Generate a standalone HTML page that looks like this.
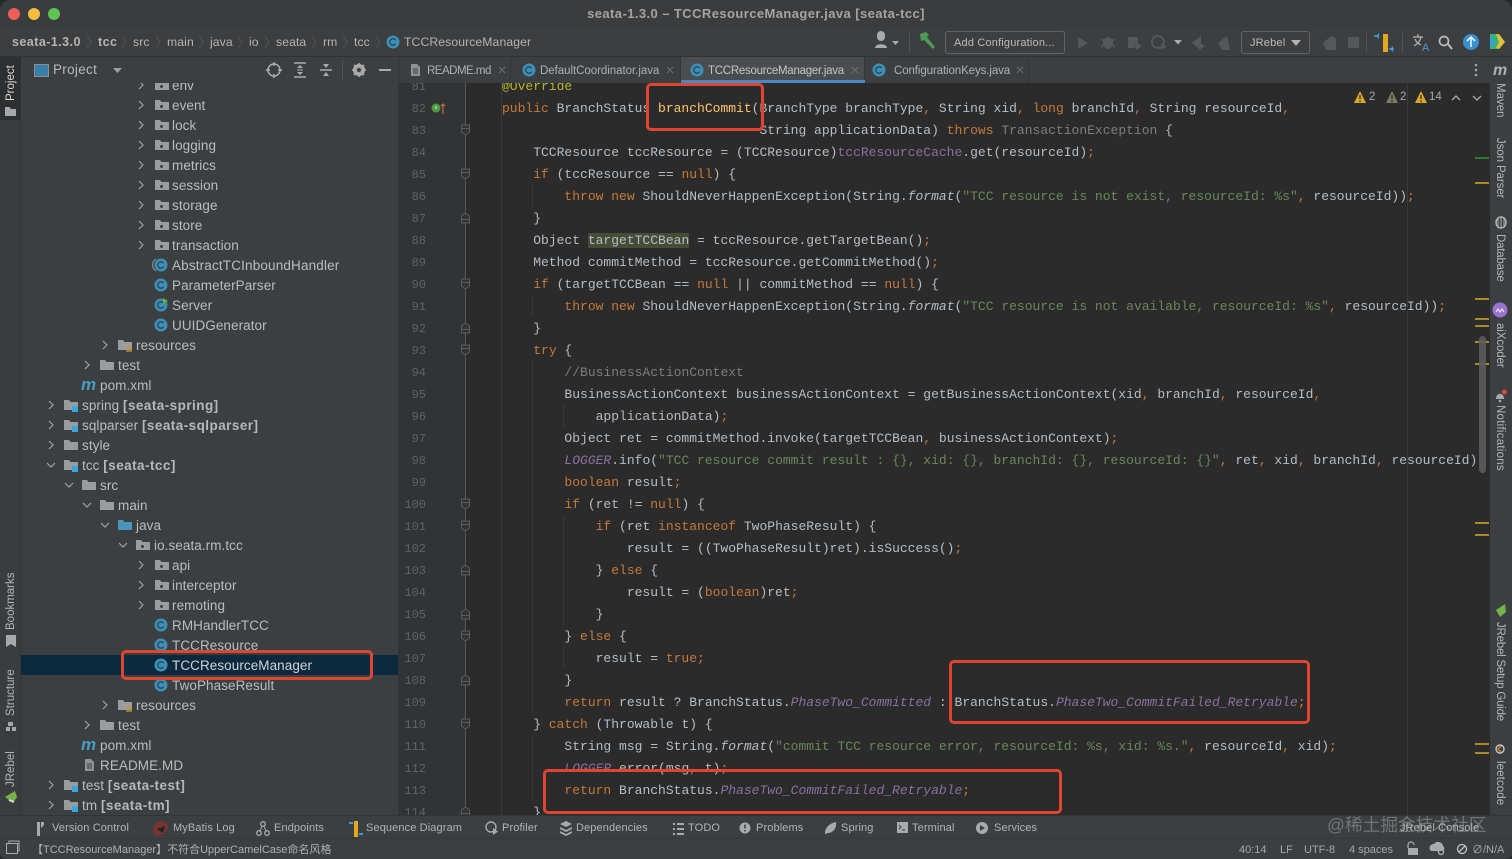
<!DOCTYPE html>
<html lang="en"><head><meta charset="utf-8"><title>seata-1.3.0 – TCCResourceManager.java [seata-tcc]</title>
<style>
*{box-sizing:border-box}
html,body{margin:0;padding:0;width:1512px;height:859px;overflow:hidden;background:#26282a}
body{font-family:"Liberation Sans","Noto Sans CJK SC",sans-serif;color:#bbbbbb}
#w{position:absolute;left:0;top:0;width:1512px;height:859px;background:#3c3f41;border-radius:10px 10px 6px 6px;overflow:hidden}
.b{position:absolute}
.t{position:absolute;white-space:pre}
svg{position:absolute;overflow:visible}
#title{left:0;top:0;width:1512px;height:28px;background:#3a3c3e;text-align:center;font-size:13px;font-weight:bold;line-height:27px;color:#a4a4a4;letter-spacing:.42px}
#nav{left:0;top:28px;width:1512px;height:29px;background:#3c3e40;border-bottom:1px solid #303234}
.bc{top:35px;font-size:12.2px;line-height:15px;color:#b4b4b4;letter-spacing:.1px}
.bc b{letter-spacing:.45px;font-size:12.5px}
#tree{left:21px;top:83px;width:377px;height:732px;overflow:hidden;background:#3c3f41}
.r{position:absolute;left:-21px;width:398px;height:20px}
.r span{position:absolute;top:3px;font-size:13.5px;line-height:16px;color:#bcbcbc;white-space:pre;letter-spacing:.07px}
.r b{color:#b8b8b8;letter-spacing:.45px}
.r svg{top:3px;width:14px;height:14px}
.sel{background:#0d293e}
#lstrip{left:0;top:57px;width:21px;height:758px;background:#3a3d3f;border-right:1px solid #333537}
#rstrip{left:1490px;top:57px;width:22px;height:758px;background:#3c3f41}
.vl{position:absolute;font-size:11.5px;line-height:14px;color:#b6b6b6;white-space:pre;transform-origin:0 0}
.tab{top:57px;height:26px;background:#3c3f41;border-right:1px solid #323436}
.tt{top:64px;font-size:11.5px;line-height:14px;color:#b0b0b0}
#gut{left:398px;top:83px;width:68px;height:732px;background:#313335}
#ed{left:466px;top:83px;width:1024px;height:732px;background:#2b2b2b}
.code{position:absolute;margin:0;font-family:"Liberation Mono",monospace;font-size:13px;line-height:22px;white-space:pre}
#src{left:502px;top:76px;color:#b4bec6;height:739px;clip-path:inset(7px -1000px 0 0)}
#num{left:398px;top:76px;width:28px;text-align:right;color:#5f6264;font-size:12px;height:739px;clip-path:inset(7px 0 0 -10px)}
.k{color:#c5793a}.s{color:#6a8759}.f{color:#8a71a0;font-style:italic}.m{color:#8a71a0}.c{color:#7d7d7d}.y{color:#bbb529}.h{color:#ffc66d}.i{font-style:italic}.g{color:#7b7f80}
.hl{background:#474c37}
.rb{position:absolute;border:3px solid #e0452f;border-radius:5px}
.mk{position:absolute;left:1475px;width:14px;height:2px;background:#a98a26}
.bt{top:821px;font-size:11px;line-height:14px;color:#b4b4b4;letter-spacing:.12px}
.st{top:843px;font-size:11px;line-height:14px;color:#a8a8a8}
.btn{border:1px solid #5f6365;border-radius:3px;height:23px;top:31px;font-size:11px;line-height:22px;color:#bbbbbb;text-align:left;padding-left:8px;letter-spacing:.18px}
</style></head><body><div id="w">
<svg width="0" height="0" style="position:absolute"><defs>
<g id="ar"><path d="M5 3l4 4-4 4" fill="none" stroke="#a2a2a2" stroke-width="1.2"/></g>
<g id="ad"><path d="M3 5l4 4 4-4" fill="none" stroke="#a2a2a2" stroke-width="1.2"/></g>
<g id="fo"><path d="M0 2h5l1.500 2H14v8H0z" fill="#9a9d9f"/><rect x="5" y="7" width="3" height="3" rx="1.500" fill="#3c3f41"/></g>
<g id="fp"><path d="M0 2h5l1.500 2H14v8H0z" fill="#9a9d9f"/></g>
<g id="fj"><path d="M0 2h5l1.500 2H14v8H0z" fill="#4a93bd"/></g>
<g id="fr"><path d="M0 2h5l1.500 2H14v8H0z" fill="#9a9d9f"/><path d="M8 9h6M8 11h6M8 13h6" stroke="#c09a3a" stroke-width="1.200"/></g>
<g id="fm"><path d="M0 2h5l1.500 2H14v8H0z" fill="#9a9d9f"/><rect x="8" y="8" width="6" height="6" fill="#3aa6dd"/></g>
<g id="cl"><circle cx="7" cy="7" r="6.500" fill="#3f8fb5"/><path d="M9.600 5.200A3.200 3.200 0 1 0 9.600 8.800" fill="none" stroke="#23485c" stroke-width="1.300"/></g>
<g id="mv"><text x="0" y="12" font-family="Liberation Sans" font-size="17" font-weight="bold" font-style="italic" fill="#4a9cc0">m</text></g>
<g id="md"><path d="M3 1h6l3 3v9H3z" fill="#8f9295"/><path d="M5 6h5M5 8h5M5 10h5" stroke="#3c3f41"/></g>
<g id="fd"><path d="M-4 -5h8v7l-4 3-4-3zM-4 -1.500h8" fill="#313335" stroke="#5a5c5e"/></g>
<g id="fu"><path d="M-4 5h8v-7l-4-3-4 3zM-4 1.500h8" fill="#313335" stroke="#5a5c5e"/></g>
</defs></svg>

<div class="b" id="title">seata-1.3.0 – TCCResourceManager.java [seata-tcc]</div>
<svg style="left:0;top:0" width="70" height="28"><circle cx="14" cy="14" r="6" fill="#ee5f57"/><circle cx="34" cy="14" r="6" fill="#f5bd3f"/><circle cx="54" cy="14" r="6" fill="#5fc454"/></svg>

<div class="b" id="nav"></div>
<div class="t bc" style="left:12px"><b>seata-1.3.0</b></div>
<div class="t bc" style="left:98px"><b>tcc</b></div>
<div class="t bc" style="left:133px">src</div>
<div class="t bc" style="left:167px">main</div>
<div class="t bc" style="left:210px">java</div>
<div class="t bc" style="left:249px">io</div>
<div class="t bc" style="left:276px">seata</div>
<div class="t bc" style="left:323px">rm</div>
<div class="t bc" style="left:354px">tcc</div>
<svg style="left:0;top:0" width="400" height="57"><path d="M87 36l4 6-4 6M122 36l4 6-4 6M156 36l4 6-4 6M199 36l4 6-4 6M238 36l4 6-4 6M265 36l4 6-4 6M312 36l4 6-4 6M343 36l4 6-4 6M376 36l4 6-4 6" fill="none" stroke="#505355"/><use href="#cl" x="386" y="35"/></svg>
<div class="t bc" style="left:404px">TCCResourceManager</div>

<svg style="left:870px;top:28px" width="640" height="28">
<path d="M7 7a4 4 0 0 1 8 0v2a4 4 0 0 1-8 0zM5 20c0-5 12-5 12 0z" fill="#a8abad"/><path d="M22 13h7l-3.500 4z" fill="#a8abad"/>
<path d="M50 6l6-2 3 3-2 2 8 10-2 2-9-9-3 1z" fill="#4e9a52"/>
<path d="M208 9v12l10-6z" fill="#55585a"/>
<ellipse cx="238" cy="15" rx="5" ry="6" fill="#55585a"/><path d="M231 11l3 2M231 19l3-2M245 11l-3 2M245 19l-3-2" stroke="#55585a" stroke-width="1.500"/>
<path d="M258 9h10v4l-3 7h-7z" fill="#55585a"/><path d="M266 14v8l6-4z" fill="#55585a"/>
<circle cx="288" cy="14" r="6" fill="none" stroke="#55585a" stroke-width="1.800"/><path d="M291 15v7l6-3.500z" fill="#55585a"/>
<path d="M304 12h8l-4 4.500z" fill="#a8abad"/>
<path d="M322 15l9-7v14z" fill="#55585a"/><path d="M329 14v8l6-4z" fill="#55585a"/>
<path d="M348 15l9-7 3 14h-8z" fill="#55585a"/>
<path d="M453 15l8-7 5 2v12h-10z" fill="#55585a"/><rect x="478" y="9" width="11" height="11" fill="#55585a"/>
<path d="M513 6h5v18h-5z" fill="#e3a81f"/><path d="M506 8l3-3v6zM523 18l-3 3 3 3z" fill="#3a9edd"/><path d="M504 8h5M519 21h5" stroke="#3a9edd" stroke-width="1.500"/>
<path d="M543 9h10M548 6v3M551 9c-1 5-4 7-7 9M545 11c1 3 4 5 6 6" fill="none" stroke="#b5b5b5" stroke-width="1.200"/><text x="552" y="23" font-family="Liberation Sans" font-size="11" fill="#4a9cd8">A</text>
<circle cx="574" cy="13" r="4.500" fill="none" stroke="#bdbdbd" stroke-width="1.700"/><path d="M578 16l4 5" stroke="#bdbdbd" stroke-width="2"/>
<circle cx="601" cy="14" r="8" fill="#3790cf"/><path d="M601 19v-9M597 13l4-4 4 4" fill="none" stroke="#e8f3fa" stroke-width="1.600"/>
<path d="M620 6h8l7 8-6 7h-9z" fill="#35b37e"/><path d="M626 6h3l6 8-6 7-3-1 3-6z" fill="#e1c03a"/><path d="M620 8l5 6-5 6z" fill="#3a9edd"/>
</svg>
<div class="b" style="left:909px;top:33px;width:1px;height:20px;background:#505355"></div>
<div class="b" style="left:1366px;top:33px;width:1px;height:20px;background:#505355"></div>
<div class="b" style="left:1402px;top:33px;width:1px;height:20px;background:#505355"></div>
<div class="b btn" style="left:945px;width:120px">Add Configuration...</div>
<div class="b btn" style="left:1241px;width:69px">JRebel</div>
<svg style="left:1291px;top:39px" width="12" height="8"><path d="M0 1h10l-5 6z" fill="#b0b0b0"/></svg>

<div class="b" id="lstrip"></div>
<div class="b" style="left:0;top:57px;width:21px;height:63px;background:#2d2f31"></div>
<div class="vl" style="left:4px;top:101px;transform:rotate(-90deg);color:#d8d8d8">Project</div>
<div class="vl" style="left:4px;top:630px;transform:rotate(-90deg)">Bookmarks</div>
<div class="vl" style="left:4px;top:716px;transform:rotate(-90deg)">Structure</div>
<div class="vl" style="left:4px;top:787px;transform:rotate(-90deg)">JRebel</div>
<svg style="left:0;top:0" width="21" height="815"><path d="M5 107h4.500l1.500 2h5v7H5z" fill="#a6a9ab"/><path d="M6 635h10v12l-5-3-5 3z" fill="#a6a9ab"/><path d="M8 722h5v4H8zM6 727h4v4H6zM12 727h4v4h-4z" fill="#a6a9ab"/><path d="M5 797l10-6 2 6-4 6z" fill="#74b24b"/><path d="M9 800l5 2" stroke="#ddd" stroke-width="2"/></svg>

<div class="b" style="left:21px;top:57px;width:377px;height:26px;background:#3c3f41"></div>
<div class="t" style="left:53px;top:62px;font-size:13.500px;line-height:16px;color:#b8b8b8;letter-spacing:.3px">Project</div>
<svg style="left:0;top:57px" width="400" height="26">
<rect x="34.500" y="7.500" width="14" height="12" fill="#3a7fa6" stroke="#8c8f92"/>
<path d="M113 11h9l-4.500 5z" fill="#a0a0a0"/>
<circle cx="274" cy="13" r="6" fill="none" stroke="#acacac" stroke-width="1.500"/><path d="M274 5v4M274 17v4M266 13h4M278 13h4" stroke="#acacac" stroke-width="1.500"/>
<path d="M294 6h12M294 20h12" stroke="#acacac" stroke-width="1.500"/><path d="M300 8l-3 3h6zM300 18l-3-3h6z" fill="#acacac"/><path d="M297 13h6" stroke="#acacac"/>
<path d="M320 13h12" stroke="#acacac" stroke-width="1.500"/><path d="M326 11l-3-4h6zM326 15l-3 4h6z" fill="#acacac"/>
<path d="M342.500 3v20" stroke="#4f5254"/>
<circle cx="359" cy="13" r="4.500" fill="none" stroke="#acacac" stroke-width="3"/><path d="M359 6v14M352 13h14M354 8l10 10M364 8l-10 10" stroke="#acacac" stroke-width="1.600"/><circle cx="359" cy="13" r="2" fill="#3c3f41"/>
<path d="M379 13h12" stroke="#acacac" stroke-width="2"/>
<path d="M398.500 0v26" stroke="#323436"/>
</svg>

<div class="b tab" style="left:399px;width:112px"></div>
<div class="b tab" style="left:511px;width:170px"></div>
<div class="b tab" style="left:681px;width:184px;background:#4a4d50"></div>
<div class="b tab" style="left:865px;width:164px"></div>
<div class="b" style="left:1029px;top:57px;width:461px;height:26px;background:#3c3f41"></div>
<div class="b" style="left:681px;top:80px;width:184px;height:3px;background:#4a88c7"></div>
<svg style="left:399px;top:57px" width="660" height="26">
<use href="#md" x="9" y="6"/><use href="#cl" x="123" y="6"/><use href="#cl" x="291" y="6"/><use href="#cl" x="473" y="6"/>
<path d="M100 10l6 6M106 10l-6 6M268 10l6 6M274 10l-6 6M453 10l6 6M459 10l-6 6M618 10l6 6M624 10l-6 6" stroke="#6c6f71"/>
</svg>
<div class="t tt" style="left:427px;letter-spacing:-.5px">README.md</div>
<div class="t tt" style="left:540px;letter-spacing:-.04px">DefaultCoordinator.java</div>
<div class="t tt" style="left:708px;color:#c4c4c4;letter-spacing:-.26px">TCCResourceManager.java</div>
<div class="t tt" style="left:894px;letter-spacing:-.1px">ConfigurationKeys.java</div>
<svg style="left:1470px;top:62px" width="12" height="16"><circle cx="6" cy="3" r="1.300" fill="#a8a8a8"/><circle cx="6" cy="8" r="1.300" fill="#a8a8a8"/><circle cx="6" cy="13" r="1.300" fill="#a8a8a8"/></svg>

<div class="b" id="tree">
<div style="position:absolute;left:0;top:-83px;width:377px;height:815px">
<div class="r" style="top:75px"><svg style="left:134px"><use href="#ar"/></svg><svg style="left:155px"><use href="#fo"/></svg><span style="left:172px">env</span></div>
<div class="r" style="top:95px"><svg style="left:134px"><use href="#ar"/></svg><svg style="left:155px"><use href="#fo"/></svg><span style="left:172px">event</span></div>
<div class="r" style="top:115px"><svg style="left:134px"><use href="#ar"/></svg><svg style="left:155px"><use href="#fo"/></svg><span style="left:172px">lock</span></div>
<div class="r" style="top:135px"><svg style="left:134px"><use href="#ar"/></svg><svg style="left:155px"><use href="#fo"/></svg><span style="left:172px">logging</span></div>
<div class="r" style="top:155px"><svg style="left:134px"><use href="#ar"/></svg><svg style="left:155px"><use href="#fo"/></svg><span style="left:172px">metrics</span></div>
<div class="r" style="top:175px"><svg style="left:134px"><use href="#ar"/></svg><svg style="left:155px"><use href="#fo"/></svg><span style="left:172px">session</span></div>
<div class="r" style="top:195px"><svg style="left:134px"><use href="#ar"/></svg><svg style="left:155px"><use href="#fo"/></svg><span style="left:172px">storage</span></div>
<div class="r" style="top:215px"><svg style="left:134px"><use href="#ar"/></svg><svg style="left:155px"><use href="#fo"/></svg><span style="left:172px">store</span></div>
<div class="r" style="top:235px"><svg style="left:134px"><use href="#ar"/></svg><svg style="left:155px"><use href="#fo"/></svg><span style="left:172px">transaction</span></div>
<div class="r" style="top:255px"><svg style="left:154px"><use href="#cl"/><path d="M2 1a7 7 0 0 0 0 12" fill="none" stroke="#9a9d9f"/></svg><span style="left:172px;letter-spacing:.16px">AbstractTCInboundHandler</span></div>
<div class="r" style="top:275px"><svg style="left:154px"><use href="#cl"/></svg><span style="left:172px">ParameterParser</span></div>
<div class="r" style="top:295px"><svg style="left:154px"><use href="#cl"/><path d="M9 0l5 3-5 3z" fill="#62b543"/></svg><span style="left:172px">Server</span></div>
<div class="r" style="top:315px"><svg style="left:154px"><use href="#cl"/></svg><span style="left:172px">UUIDGenerator</span></div>
<div class="r" style="top:335px"><svg style="left:98px"><use href="#ar"/></svg><svg style="left:118px"><use href="#fr"/></svg><span style="left:136px">resources</span></div>
<div class="r" style="top:355px"><svg style="left:80px"><use href="#ar"/></svg><svg style="left:100px"><use href="#fp"/></svg><span style="left:118px">test</span></div>
<div class="r" style="top:375px"><svg style="left:81px"><use href="#mv"/></svg><span style="left:100px">pom.xml</span></div>
<div class="r" style="top:395px"><svg style="left:44px"><use href="#ar"/></svg><svg style="left:64px"><use href="#fm"/></svg><span style="left:82px">spring <b>[seata-spring]</b></span></div>
<div class="r" style="top:415px"><svg style="left:44px"><use href="#ar"/></svg><svg style="left:64px"><use href="#fm"/></svg><span style="left:82px">sqlparser <b>[seata-sqlparser]</b></span></div>
<div class="r" style="top:435px"><svg style="left:44px"><use href="#ar"/></svg><svg style="left:64px"><use href="#fp"/></svg><span style="left:82px">style</span></div>
<div class="r" style="top:455px"><svg style="left:44px"><use href="#ad"/></svg><svg style="left:64px"><use href="#fm"/></svg><span style="left:82px">tcc <b>[seata-tcc]</b></span></div>
<div class="r" style="top:475px"><svg style="left:62px"><use href="#ad"/></svg><svg style="left:82px"><use href="#fp"/></svg><span style="left:100px">src</span></div>
<div class="r" style="top:495px"><svg style="left:80px"><use href="#ad"/></svg><svg style="left:100px"><use href="#fp"/></svg><span style="left:118px">main</span></div>
<div class="r" style="top:515px"><svg style="left:98px"><use href="#ad"/></svg><svg style="left:118px"><use href="#fj"/></svg><span style="left:136px">java</span></div>
<div class="r" style="top:535px"><svg style="left:116px"><use href="#ad"/></svg><svg style="left:136px"><use href="#fo"/></svg><span style="left:154px">io.seata.rm.tcc</span></div>
<div class="r" style="top:555px"><svg style="left:134px"><use href="#ar"/></svg><svg style="left:155px"><use href="#fo"/></svg><span style="left:172px">api</span></div>
<div class="r" style="top:575px"><svg style="left:134px"><use href="#ar"/></svg><svg style="left:155px"><use href="#fo"/></svg><span style="left:172px">interceptor</span></div>
<div class="r" style="top:595px"><svg style="left:134px"><use href="#ar"/></svg><svg style="left:155px"><use href="#fo"/></svg><span style="left:172px">remoting</span></div>
<div class="r" style="top:615px"><svg style="left:154px"><use href="#cl"/></svg><span style="left:172px">RMHandlerTCC</span></div>
<div class="r" style="top:635px"><svg style="left:154px"><use href="#cl"/></svg><span style="left:172px">TCCResource</span></div>
<div class="r sel" style="top:655px"><svg style="left:154px"><use href="#cl"/></svg><span style="left:172px;color:#d0d4d8">TCCResourceManager</span></div>
<div class="r" style="top:675px"><svg style="left:154px"><use href="#cl"/></svg><span style="left:172px">TwoPhaseResult</span></div>
<div class="r" style="top:695px"><svg style="left:98px"><use href="#ar"/></svg><svg style="left:118px"><use href="#fr"/></svg><span style="left:136px">resources</span></div>
<div class="r" style="top:715px"><svg style="left:80px"><use href="#ar"/></svg><svg style="left:100px"><use href="#fp"/></svg><span style="left:118px">test</span></div>
<div class="r" style="top:735px"><svg style="left:81px"><use href="#mv"/></svg><span style="left:100px">pom.xml</span></div>
<div class="r" style="top:755px"><svg style="left:82px"><use href="#md"/></svg><span style="left:100px">README.MD</span></div>
<div class="r" style="top:775px"><svg style="left:44px"><use href="#ar"/></svg><svg style="left:64px"><use href="#fm"/></svg><span style="left:82px">test <b>[seata-test]</b></span></div>
<div class="r" style="top:795px"><svg style="left:44px"><use href="#ar"/></svg><svg style="left:64px"><use href="#fm"/></svg><span style="left:82px">tm <b>[seata-tm]</b></span></div>
</div></div>

<div class="b" id="gut"></div>
<div class="b" id="ed"></div>
<svg style="left:398px;top:83px" width="1092" height="732">
<path d="M67.500 0v732" stroke="#555759"/>
<path d="M103.500 0v732M1009.500 0v732" stroke="#3a3a3a"/>
<path d="M134.500 102v22M134.500 212v22M134.500 278v352M134.500 652v66M165.500 322v22M165.500 432v110M165.500 564v22" stroke="#383838"/>
<use href="#fd" x="67.500" y="47"/><use href="#fd" x="67.500" y="91"/><use href="#fu" x="67.500" y="135"/><use href="#fd" x="67.500" y="201"/><use href="#fu" x="67.500" y="245"/><use href="#fd" x="67.500" y="267"/><use href="#fd" x="67.500" y="421"/><use href="#fd" x="67.500" y="443"/><use href="#fu" x="67.500" y="487"/><use href="#fu" x="67.500" y="531"/><use href="#fd" x="67.500" y="553"/><use href="#fu" x="67.500" y="597"/><use href="#fd" x="67.500" y="641"/><use href="#fu" x="67.500" y="729"/>
<circle cx="38" cy="25" r="4.500" fill="#4f9a45"/><path d="M38 23v3" stroke="#cde3c8" stroke-width="1.200"/><path d="M45 21v10M43 23l2-2 2 2" fill="none" stroke="#c8674f" stroke-width="1.200"/>
</svg>
<pre class="code" id="num">81
82
83
84
85
86
87
88
89
90
91
92
93
94
95
96
97
98
99
100
101
102
103
104
105
106
107
108
109
110
111
112
113
114</pre>
<div class="b" style="left:0;top:815px;width:1512px;height:44px;background:#3c3f41"></div>
<pre class="code" id="src"><span class="y">@Override</span>
<span class="k">public</span> BranchStatus <span class="h">branchCommit</span>(BranchType branchType<span class="k">,</span> String xid<span class="k">,</span> <span class="k">long</span> branchId<span class="k">,</span> String resourceId<span class="k">,</span>
                                 String applicationData) <span class="k">throws</span> <span class="g">TransactionException</span> {
    TCCResource tccResource = (TCCResource)<span class="m">tccResourceCache</span>.get(resourceId)<span class="k">;</span>
    <span class="k">if</span> (tccResource == <span class="k">null</span>) {
        <span class="k">throw new</span> ShouldNeverHappenException(String.<span class="i">format</span>(<span class="s">"TCC resource is not exist, resourceId: %s"</span><span class="k">,</span> resourceId))<span class="k">;</span>
    }
    Object <span class="hl">targetTCCBean</span> = tccResource.getTargetBean()<span class="k">;</span>
    Method commitMethod = tccResource.getCommitMethod()<span class="k">;</span>
    <span class="k">if</span> (targetTCCBean == <span class="k">null</span> || commitMethod == <span class="k">null</span>) {
        <span class="k">throw new</span> ShouldNeverHappenException(String.<span class="i">format</span>(<span class="s">"TCC resource is not available, resourceId: %s"</span><span class="k">,</span> resourceId))<span class="k">;</span>
    }
    <span class="k">try</span> {
        <span class="c">//BusinessActionContext</span>
        BusinessActionContext businessActionContext = getBusinessActionContext(xid<span class="k">,</span> branchId<span class="k">,</span> resourceId<span class="k">,</span>
            applicationData)<span class="k">;</span>
        Object ret = commitMethod.invoke(targetTCCBean<span class="k">,</span> businessActionContext)<span class="k">;</span>
        <span class="f">LOGGER</span>.info(<span class="s">"TCC resource commit result : {}, xid: {}, branchId: {}, resourceId: {}"</span><span class="k">,</span> ret<span class="k">,</span> xid<span class="k">,</span> branchId<span class="k">,</span> resourceId)
        <span class="k">boolean</span> result<span class="k">;</span>
        <span class="k">if</span> (ret != <span class="k">null</span>) {
            <span class="k">if</span> (ret <span class="k">instanceof</span> TwoPhaseResult) {
                result = ((TwoPhaseResult)ret).isSuccess()<span class="k">;</span>
            } <span class="k">else</span> {
                result = (<span class="k">boolean</span>)ret<span class="k">;</span>
            }
        } <span class="k">else</span> {
            result = <span class="k">true;</span>
        }
        <span class="k">return</span> result ? BranchStatus.<span class="f">PhaseTwo_Committed</span> : BranchStatus.<span class="f">PhaseTwo_CommitFailed_Retryable</span><span class="k">;</span>
    } <span class="k">catch</span> (Throwable t) {
        String msg = String.<span class="i">format</span>(<span class="s">"commit TCC resource error, resourceId: %s, xid: %s."</span><span class="k">,</span> resourceId<span class="k">,</span> xid)<span class="k">;</span>
        <span class="f">LOGGER</span>.error(msg<span class="k">,</span> t)<span class="k">;</span>
        <span class="k">return</span> BranchStatus.<span class="f">PhaseTwo_CommitFailed_Retryable</span><span class="k">;</span>
    }</pre>

<svg style="left:1350px;top:90px" width="140" height="16">
<path d="M10 1l6 12H4z" fill="#d9a62a"/><path d="M10 5v4M10 10.500v1.500" stroke="#2b2b2b" stroke-width="1.300"/>
<path d="M42 1l6 12H36z" fill="#7c7a62"/><path d="M42 5v4M42 10.500v1.500" stroke="#2b2b2b" stroke-width="1.300"/>
<path d="M71 1l6 12H65z" fill="#d9a62a"/><path d="M71 5v4M71 10.500v1.500" stroke="#2b2b2b" stroke-width="1.300"/>
<path d="M102 10l4-4 4 4M123 6l4 4 4-4" fill="none" stroke="#aaaaaa" stroke-width="1.300"/>
</svg>
<div class="t" style="left:1369px;top:90px;font-size:11.500px;line-height:14px;color:#a8a8a8">2</div>
<div class="t" style="left:1400px;top:90px;font-size:11.500px;line-height:14px;color:#a8a8a8">2</div>
<div class="t" style="left:1429px;top:90px;font-size:11.500px;line-height:14px;color:#a8a8a8">14</div>

<div class="mk" style="top:157px;background:#2f7a34"></div>
<div class="mk" style="top:182px"></div>
<div class="mk" style="top:298px"></div>
<div class="mk" style="top:318px"></div>
<div class="mk" style="top:325px"></div>
<div class="mk" style="top:341px"></div>
<div class="mk" style="top:363px"></div>
<div class="mk" style="top:522px"></div>
<div class="mk" style="top:534px"></div>
<div class="mk" style="top:743px"></div>
<div class="mk" style="top:752px"></div>
<div class="b" style="left:1479px;top:336px;width:7px;height:137px;background:#5a5c5e;border-radius:4px;opacity:.9"></div>

<div class="b" id="rstrip"></div>
<div class="t" style="left:1493px;top:62px;font-size:16px;font-weight:bold;font-style:italic;line-height:18px;color:#b0b0b0">m</div>
<div class="vl" style="left:1507px;top:83px;transform:rotate(90deg)">Maven</div>
<div class="vl" style="left:1507px;top:138px;transform:rotate(90deg);letter-spacing:-.1px">Json Parser</div>
<div class="vl" style="left:1507px;top:234px;transform:rotate(90deg);letter-spacing:-.2px">Database</div>
<div class="vl" style="left:1507px;top:323px;transform:rotate(90deg);letter-spacing:-.1px">aiXcoder</div>
<div class="vl" style="left:1507px;top:405px;transform:rotate(90deg);letter-spacing:.25px">Notifications</div>
<div class="vl" style="left:1507px;top:622px;transform:rotate(90deg);letter-spacing:-.22px">JRebel Setup Guide</div>
<div class="vl" style="left:1507px;top:761px;transform:rotate(90deg);letter-spacing:.1px">leetcode</div>
<svg style="left:1490px;top:0" width="22" height="815">
<ellipse cx="11" cy="222.500" rx="5" ry="5.500" fill="none" stroke="#b0b0b0" stroke-width="1.500"/><path d="M8 217v11M11 217v11M14 217v11" stroke="#b0b0b0"/>
<circle cx="10" cy="310" r="7.500" fill="#9a72cf"/><path d="M6 312l2-3 2 3 2-3 2 3" fill="none" stroke="#eee" stroke-width="1.100"/>
<path d="M6 399c0-7 8-7 8 0z" fill="#a6a9ab"/><circle cx="10" cy="401" r="1.300" fill="#a6a9ab"/><circle cx="14.500" cy="392" r="2.500" fill="#d8483e"/>
<path d="M6 610l9-6 1 8-6 5z" fill="#74b24b"/>
<circle cx="10" cy="749" r="4" fill="none" stroke="#c8c8c8" stroke-width="1.400"/><path d="M11 746l-3 3 3 3" stroke="#d9822b" fill="none" stroke-width="1.400"/>
</svg>

<div class="rb" style="left:646px;top:83px;width:118px;height:48px"></div>
<div class="rb" style="left:121px;top:650px;width:252px;height:30px"></div>
<div class="rb" style="left:949px;top:660px;width:361px;height:64px"></div>
<div class="rb" style="left:543px;top:769px;width:519px;height:45px"></div>

<div class="b" style="left:0;top:815px;width:1512px;height:1px;background:#323436"></div>
<div class="b" style="left:0;top:838px;width:1512px;height:1px;background:#37393b"></div>
<svg style="left:0;top:816px" width="1060" height="43">
<g fill="#a8abad" stroke="none">
<path d="M37 6h3v14h-3zM41 6h3v3l-3 3z"/>
<path d="M154 9l6-4 7 2 1 5-3 5-8 3-4-4z" fill="#7a3430"/><path d="M157 13l8-3-2 7z" fill="#222"/>
<circle cx="263" cy="8" r="2.300" fill="none" stroke="#a8abad" stroke-width="1.300"/><circle cx="259" cy="17" r="2.300" fill="none" stroke="#a8abad" stroke-width="1.300"/><circle cx="267" cy="17" r="2.300" fill="none" stroke="#a8abad" stroke-width="1.300"/><path d="M262 10l-2 5M264 10l2 5" stroke="#a8abad"/>
<path d="M354 5h4v16h-4z" fill="#e3a81f"/><path d="M349 7h4M359 18h4" stroke="#3a9edd" stroke-width="2"/>
<circle cx="491" cy="11" r="5" fill="none" stroke="#a8abad" stroke-width="1.400"/><path d="M493 12v7l5-3.500z"/>
<path d="M566 5l6 3-6 3-6-3zM560 11l6 3 6-3v2l-6 3-6-3zM560 15l6 3 6-3v2l-6 3-6-3z"/>
<path d="M673 7h2v2h-2zM673 12h2v2h-2zM673 17h2v2h-2zM677 7h7v2h-7zM677 12h7v2h-7zM677 17h7v2h-7z"/>
<circle cx="745" cy="12" r="5.500"/><path d="M745 8.500v4M745 14v1.500" stroke="#3c3f41" stroke-width="1.500"/>
<path d="M825 16c1-6 6-9 11-10 1 6-3 11-8 11l-3 1z"/>
<path d="M897 6h11v11h-11z"/><path d="M899 9l2 2-2 2M902 14h3" stroke="#3c3f41" fill="none"/>
<circle cx="982" cy="12" r="6"/><path d="M980 9v6l5-3z" fill="#3c3f41"/>
<rect x="6.500" y="27.500" width="11" height="10" fill="none" stroke="#a8abad"/><path d="M9 27v-2h10v10h-2" fill="none" stroke="#a8abad"/>
</g></svg>
<div class="t bt" style="left:52px">Version Control</div>
<div class="t bt" style="left:173px">MyBatis Log</div>
<div class="t bt" style="left:274px">Endpoints</div>
<div class="t bt" style="left:366px">Sequence Diagram</div>
<div class="t bt" style="left:502px">Profiler</div>
<div class="t bt" style="left:576px">Dependencies</div>
<div class="t bt" style="left:688px">TODO</div>
<div class="t bt" style="left:756px">Problems</div>
<div class="t bt" style="left:841px">Spring</div>
<div class="t bt" style="left:912px">Terminal</div>
<div class="t bt" style="left:994px">Services</div>
<div class="t bt" style="left:1400px">JRebel Console</div>
<div class="t" style="left:1327px;top:814px;font-size:17.700px;line-height:22px;color:rgba(190,190,190,.42)">@稀土掘金技术社区</div>

<div class="t st" style="left:32px;color:#b0b0b0">【TCCResourceManager】不符合UpperCamelCase命名风格</div>
<div class="t st" style="left:1239px">40:14</div>
<div class="t st" style="left:1280px">LF</div>
<div class="t st" style="left:1304px">UTF-8</div>
<div class="t st" style="left:1349px">4 spaces</div>
<div class="t st" style="left:1472px">∅/N/A</div>
<svg style="left:1400px;top:840px" width="80" height="18">
<path d="M8 8h10v7H8z" fill="#a8abad"/><path d="M8 8V5a3 3 0 0 1 6 0" fill="none" stroke="#a8abad" stroke-width="1.300"/>
<path d="M31 11a4 4 0 0 1 3-7 5 5 0 0 1 9 2 3 3 0 0 1 0 5z" fill="#a8abad"/><circle cx="41" cy="12" r="2.500" fill="none" stroke="#a8abad" stroke-width="1.500"/>
<circle cx="62" cy="9" r="4.500" fill="none" stroke="#c4c4c4" stroke-width="1.300"/><path d="M59 12l6-6" stroke="#c4c4c4" stroke-width="1.300"/>
</svg>
</div></body></html>
